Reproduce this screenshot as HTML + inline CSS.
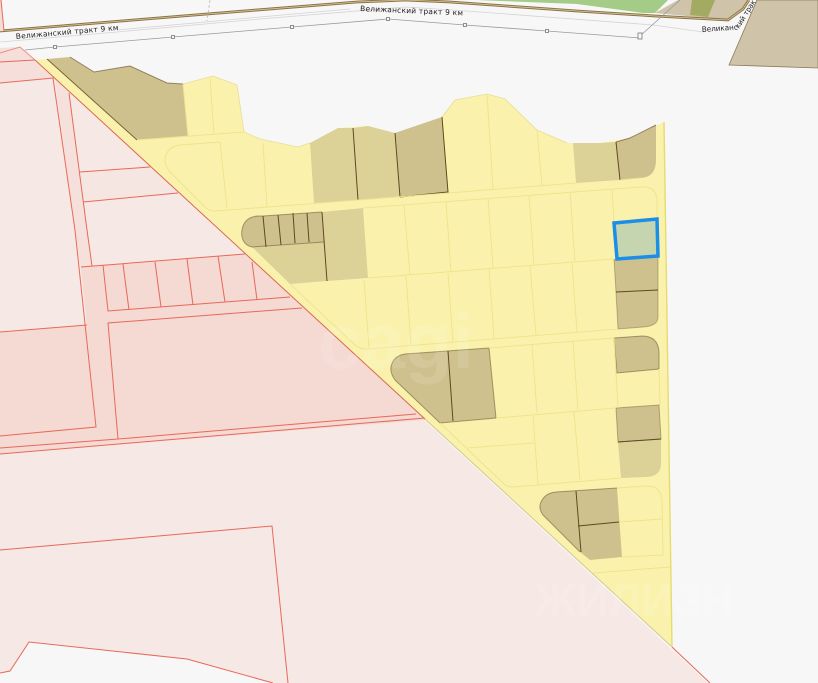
<!DOCTYPE html>
<html lang="ru">
<head>
<meta charset="utf-8">
<title>Map</title>
<style>
html,body{margin:0;padding:0;background:#f7f7f7;width:818px;height:683px;overflow:hidden}
svg{display:block;filter:blur(.3px)}
text{font-family:"DejaVu Sans","Liberation Sans",sans-serif;font-size:7.500px;fill:#222}
.dk{stroke:#5c4a20;stroke-width:1;fill:none}
.yl{stroke:#eee48e;stroke-width:1;fill:none}
.rd{stroke:#e8695a;stroke-width:1;fill:none}
.t1{fill:#cfc18e;stroke:none}
.t2{fill:#dcd297;stroke:none}
.gr{stroke:#9a9a9a;stroke-width:.8;fill:none}
.lg{stroke:#d4d4d4;stroke-width:.8;fill:none}
.sq{fill:#f7f7f7;stroke:#777;stroke-width:.8}
</style>
</head>
<body>
<svg width="818" height="683" viewBox="0 0 818 683" xmlns="http://www.w3.org/2000/svg">
<rect width="818" height="683" fill="#f7f7f7"/>

<!-- top area -->
<polygon points="477,0 668,0 655,13 643,13 577,4" fill="#a5cc86"/>
<polygon points="655,13 678,0 748,0 743,9 728,20" fill="#cfc3aa"/>
<polygon points="692,0 715,0 708,17 690,15" fill="#a3aa62"/>
<polyline points="0,31 207,14 357,2 405,0 450,2 577,11 655,16 728,20 743,9 749,0" fill="none" stroke="#8b7445" stroke-width="2.800"/>
<polyline points="0,31 207,14 357,2 405,0 450,2 577,11 655,16 728,20 743,9 749,0" fill="none" stroke="#d8c9a0" stroke-width=".8"/>
<polygon points="729,65 757,0 818,0 818,68" fill="#cfc3aa" stroke="#8b7a55" stroke-width=".8"/>
<polygon points="0,0 1,0 4,31 0,31" fill="#f6dcd7"/>
<line x1="1" y1="0" x2="4" y2="31" class="rd"/>
<line x1="210" y1="0" x2="207" y2="21" stroke="#bbb" stroke-width=".8" stroke-dasharray="3 2"/>

<!-- road lines -->
<polyline points="0,42 117,32 260,19 405,7 453,10 653,25 703,32" class="lg"/>
<polyline points="117,30 260,17 350,9" class="lg"/>
<polyline points="25,50 55,47 173,37 292,27 388,19 465,25 547,31 640,38" class="gr"/>
<line x1="640" y1="36" x2="680" y2="0" class="gr"/>
<rect x="53.500" y="45.500" width="3" height="3" class="sq"/>
<rect x="171.500" y="35.500" width="3" height="3" class="sq"/>
<rect x="290.500" y="25.500" width="3" height="3" class="sq"/>
<rect x="386.500" y="17.500" width="3" height="3" class="sq"/>
<rect x="463.500" y="23.500" width="3" height="3" class="sq"/>
<rect x="545.500" y="29.500" width="3" height="3" class="sq"/>
<rect x="638" y="33" width="4" height="6" class="sq"/>
<text transform="translate(16,39) rotate(-5)" textLength="103" lengthAdjust="spacing">Велижанский тракт 9 км</text>
<text transform="translate(360,11) rotate(2.500)" textLength="103" lengthAdjust="spacing">Велижанский тракт 9 км</text>
<text transform="translate(702,32) rotate(-4)" textLength="36" lengthAdjust="spacingAndGlyphs">Великанс</text>
<text transform="translate(739,29) rotate(-58)" textLength="36" lengthAdjust="spacingAndGlyphs">кий тракт</text>

<!-- pink -->
<polygon points="0,48 20,47 35,60 708,683 273,683 187,659 29,642 10,671 0,673" fill="#f6e8e4"/>
<polygon points="0,48 20,47 54,79 0,83" fill="#f6dfda"/>
<polygon points="55,79 69,93 87,230 92,266 81,267 74,230" fill="#f6e0db"/>
<polygon points="81,267 245,254 426,420 0,454 0,332 87,325" fill="#f5d9d3"/>
<polygon points="80,172 150,167 178,193 83,202" fill="#f6e6e2"/>

<!-- red lines -->
<polyline points="0,53 20,47 35,60" class="rd" stroke-opacity=".7"/>
<line x1="0" y1="62" x2="35" y2="60" class="rd"/>
<polyline points="0,83 53,78 75,230 96,427 0,436" class="rd"/>
<polyline points="69,93 87,230 92,266" class="rd"/>
<line x1="80" y1="172" x2="150" y2="167" class="rd"/>
<line x1="83" y1="202" x2="178" y2="193" class="rd"/>
<line x1="81" y1="267" x2="245" y2="254" class="rd"/>
<polyline points="103,265 108,311 290,297" class="rd"/>
<polyline points="302,308 108,323 118,439 416,414" class="rd"/>
<polyline points="0,454 425,418" class="rd"/>
<polyline points="0,448 118,439" class="rd"/>
<line x1="0" y1="332" x2="87" y2="325" class="rd"/>
<line x1="123" y1="264" x2="129" y2="310" class="rd"/>
<line x1="155" y1="262" x2="161" y2="307" class="rd"/>
<line x1="187" y1="259" x2="193" y2="305" class="rd"/>
<line x1="218" y1="256" x2="225" y2="302" class="rd"/>
<line x1="252" y1="262" x2="257" y2="300" class="rd"/>
<polyline points="0,550 272,526 288,683" class="rd"/>
<polyline points="0,673 10,671 29,642 187,659 273,683" class="rd" stroke-width=".8"/>
<line x1="672" y1="647" x2="710" y2="683" class="rd" stroke-width=".8"/>

<!-- yellow area -->
<polygon points="35,60 47,59 70,57 94,72 130,66 167,83 183,84 213,76 237,85 244,132 260,139 298,147 310,143 338,128 368,126 395,133 442,117 455,100 487,94 505,99 537,130 567,143 600,143 630,138 664,122 672,647" fill="#faf2ac"/>
<line x1="35" y1="60" x2="425" y2="419" stroke="#d9694e" stroke-width="1"/>
<line x1="425" y1="419" x2="672" y2="647" stroke="#d6c88a" stroke-width="1"/>
<polyline points="183,84 213,76 237,85 244,132 260,139 298,147 310,143" fill="none" stroke="#e8de94" stroke-width=".8"/>
<polyline points="442,117 455,100 487,94 505,99 537,130 567,143" fill="none" stroke="#e8de94" stroke-width=".8"/>

<!-- tan lots -->
<polygon class="t1" points="47,59 70,57 94,72 130,66 167,83 183,84 188,136 137,140"/>
<polygon class="t2" points="310,143 338,128 353,128 358,200 314,203"/>
<polygon class="t2" points="353,128 368,126 395,133 400,197 358,200"/>
<polygon class="t1" points="395,133 442,117 448,192 400,197"/>
<polygon class="t2" points="573,143 600,143 616,142 620,180 576,183"/>
<path class="t1" d="M616,142 L630,138 L656,125 L656,160 Q656,177 641,178 L620,180 Z"/>

<!-- block 2 tan -->
<path class="t1" d="M263,216 L322,212 L324,242 L252,247 Q246,246 243,240 Q241,236 242,230 Q244,217 258,216 Z"/>
<polygon class="t2" points="322,212 363,208 368,278 327,281 290,284 252,247 324,242"/>
<polygon fill="#c5d5b0" points="614,223 657,219 658,256 617,259"/>
<polygon class="t1" points="614,259 658,256 658,290 616,292"/>
<path class="t1" d="M616,292 L658,290 L658,317 Q658,326 643,327 L618,329 Z"/>

<!-- block 3 tan -->
<path class="t1" d="M489,348 L496,418 L440,423 L395,380 Q390,373 391,367 Q393,356 405,354 Z"/>
<path class="t1" d="M614,338 L642,336 Q658,336 659,352 L659,369 L617,373 Z"/>
<polygon class="t1" points="616,408 659,405 661,439 618,442"/>
<path class="t2" d="M618,442 L661,439 L661,465 Q660,476 647,477 L621,478 Z"/>

<!-- block 4 tan -->
<path class="t1" d="M617,488 L622,557 L590,560 L580,552 L543,515 Q538,508 541,502 Q545,493 556,492 Z"/>

<!-- dark dividers -->
<polyline class="dk" stroke-opacity=".8" points="47,59 137,140"/>
<polyline class="dk" stroke-opacity=".6" points="70,57 94,72 130,66 167,83 183,84"/>
<line class="dk" x1="353" y1="128" x2="358" y2="200"/>
<line class="dk" x1="395" y1="133" x2="400" y2="197"/>
<polyline class="dk" points="442,117 448,192 400,197"/>
<line class="dk" x1="616" y1="142" x2="620" y2="180"/>
<polyline class="dk" stroke-opacity=".6" points="616,142 630,138 656,125"/>
<path class="dk" stroke-opacity=".5" d="M322,212 L263,216 L258,216 Q244,217 242,230 Q241,236 243,240 Q246,246 252,247 L324,242"/>
<line class="dk" x1="263" y1="216" x2="266" y2="247"/>
<line class="dk" x1="278" y1="215" x2="281" y2="245"/>
<line class="dk" x1="293" y1="213" x2="295" y2="243"/>
<line class="dk" x1="307" y1="213" x2="309" y2="242"/>
<line class="dk" x1="322" y1="212" x2="327" y2="281"/>
<line class="dk" x1="616" y1="292" x2="658" y2="290"/>
<path class="dk" stroke-opacity=".35" d="M614,259 L616,292 L618,329 L643,327 Q658,326 658,317 L658,256"/>
<path class="dk" stroke-opacity=".5" d="M489,348 L496,418 L440,423 L395,380 Q390,373 391,367 Q393,356 405,354 L489,348"/>
<line class="dk" x1="448" y1="351" x2="453" y2="421"/>
<path class="dk" stroke-opacity=".5" d="M614,338 L642,336 Q658,336 659,352 L659,369 L617,373 Z"/>
<polygon class="dk" stroke-opacity=".4" points="616,408 659,405 661,439 618,442"/>
<line class="dk" x1="618" y1="442" x2="661" y2="439"/>
<path class="dk" stroke-opacity=".5" d="M617,488 L556,492 Q545,493 541,502 Q538,508 543,515 L580,552"/>
<line class="dk" x1="576" y1="491" x2="581" y2="552"/>
<line class="dk" x1="578" y1="526" x2="619" y2="522"/>

<!-- yellow lot lines -->
<line class="yl" x1="210" y1="78" x2="214" y2="134"/>
<line class="yl" x1="183" y1="84" x2="188" y2="136"/>
<line class="yl" x1="137" y1="140" x2="244" y2="132"/>
<path class="yl" d="M220,142 L180,145 Q166,147 165,160 Q165,166 170,172 L205,207 Q209,211 215,211 L410,196 L576,183"/>
<path class="yl" d="M620,180 L641,178"/>
<line class="yl" x1="220" y1="142" x2="227" y2="208"/>
<line class="yl" x1="263" y1="143" x2="267" y2="207"/>
<line class="yl" x1="487" y1="94" x2="493" y2="190"/>
<line class="yl" x1="537" y1="130" x2="542" y2="185"/>
<path class="yl" d="M363,208 L641,187 Q656,186 657,200 L657,219"/>
<line class="yl" x1="404" y1="205" x2="410" y2="275"/>
<line class="yl" x1="446" y1="202" x2="451" y2="272"/>
<line class="yl" x1="488" y1="198" x2="493" y2="268"/>
<line class="yl" x1="529" y1="195" x2="534" y2="265"/>
<line class="yl" x1="570" y1="192" x2="575" y2="262"/>
<line class="yl" x1="612" y1="190" x2="614" y2="222"/>
<line class="yl" x1="368" y1="278" x2="613" y2="259"/>
<path class="yl" d="M290,284 L355,345 Q359,349 367,349 L618,329"/>
<line class="yl" x1="364" y1="280" x2="369" y2="348"/>
<line class="yl" x1="406" y1="276" x2="411" y2="345"/>
<line class="yl" x1="448" y1="273" x2="453" y2="342"/>
<line class="yl" x1="489" y1="269" x2="494" y2="338"/>
<line class="yl" x1="530" y1="266" x2="536" y2="335"/>
<line class="yl" x1="572" y1="263" x2="577" y2="332"/>
<line class="yl" x1="489" y1="348" x2="614" y2="338"/>
<line class="yl" x1="532" y1="345" x2="537" y2="413"/>
<line class="yl" x1="573" y1="342" x2="578" y2="410"/>
<line class="yl" x1="496" y1="418" x2="616" y2="408"/>
<line class="yl" x1="614" y1="338" x2="618" y2="408"/>
<line class="yl" x1="659" y1="369" x2="660" y2="405"/>
<line class="yl" x1="533" y1="415" x2="538" y2="485"/>
<line class="yl" x1="574" y1="412" x2="580" y2="480"/>
<line class="yl" x1="467" y1="448" x2="534" y2="443"/>
<path class="yl" d="M440,423 L503,483 Q507,487 513,487 L621,478"/>
<path class="yl" d="M617,488 L647,486 Q661,486 662,500 L663,555 L622,557"/>
<line class="yl" x1="620" y1="522" x2="662" y2="519"/>
<line class="yl" x1="593" y1="573" x2="670" y2="567"/>
<line x1="664" y1="122" x2="672" y2="647" stroke="#e6dc6e" stroke-width="1.400"/>

<!-- selected plot -->
<polygon points="614,223 657,219 658,256 617,259" fill="none" stroke="#1b8ee8" stroke-width="3.500"/>

<!-- watermarks -->
<text x="318" y="368" style="font-family:'Liberation Sans',sans-serif;font-size:78px;font-weight:700;fill:#fff;fill-opacity:.12">cagi</text>
<text x="535" y="616" textLength="200" lengthAdjust="spacingAndGlyphs" style="font-family:'Liberation Sans',sans-serif;font-size:46px;font-weight:700;fill:#fff;fill-opacity:.12">ЖИЛИЗН</text>
</svg>
</body>
</html>
